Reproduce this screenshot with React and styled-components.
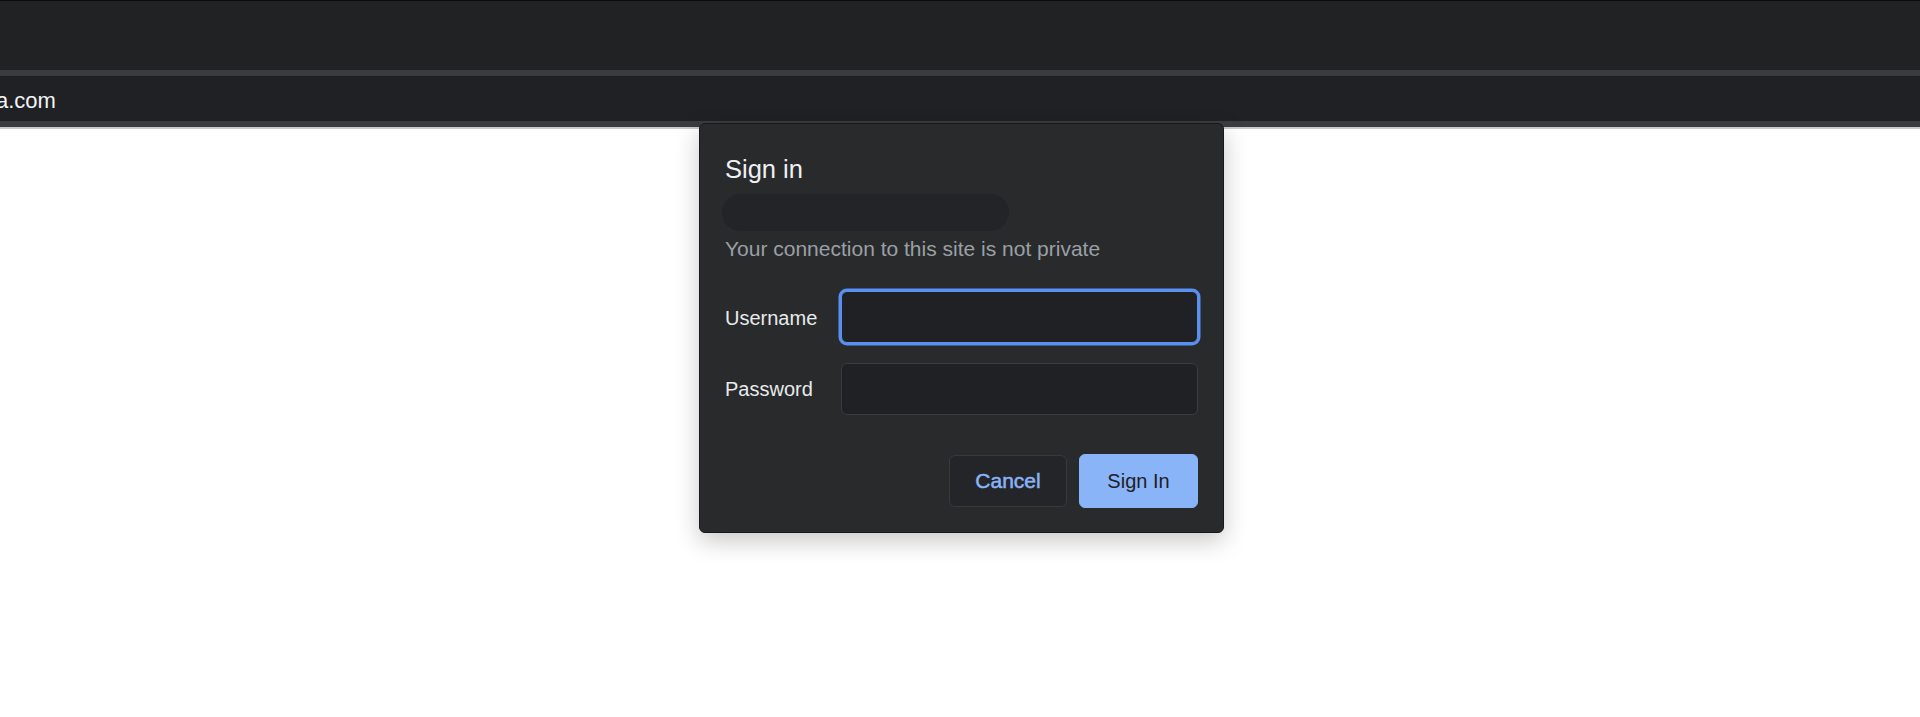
import styled, { createGlobalStyle } from "styled-components";

const GlobalStyle = createGlobalStyle`
  html, body {
    margin: 0;
    padding: 0;
    background: #ffffff;
    font-family: "Liberation Sans", Arial, sans-serif;
  }
  * {
    box-sizing: border-box;
  }
`;

export default function App() {
  return (
    <>
      <GlobalStyle />
      <Page>
        <TabStrip />
        <Divider />
        <AddressBar>
          <Url>a.com</Url>
        </AddressBar>
        <ToolbarEdge />

        <Dialog role="dialog" aria-label="Sign in">
          <Title>Sign in</Title>
          <OriginPill />
          <Notice>Your connection to this site is not private</Notice>

          <Form>
            <Label htmlFor="username" nudge="1px">Username</Label>
            <Field id="username" type="text" focused="true" />
            <Label htmlFor="password">Password</Label>
            <Field id="password" type="password" />
          </Form>

          <Actions>
            <Button>Cancel</Button>
            <Button primary="true">Sign In</Button>
          </Actions>
        </Dialog>
      </Page>
    </>
  );
}

const Page = styled.div`
  position: relative;
  width: 100%;
  height: 717px;
  overflow: hidden;
  background: #ffffff;
`;

const TabStrip = styled.div`
  height: 70px;
  background: #212224;
  border-top: 1px solid #0b0b0c;
`;

const Divider = styled.div`
  height: 7px;
  background: #3a3b3e;
  border-bottom: 1px solid #1d1e20;
`;

const AddressBar = styled.div`
  height: 44px;
  display: flex;
  align-items: center;
  padding-top: 3px;
  background: #202124;
`;

const Url = styled.span`
  margin-left: -4px;
  font-size: 22px;
  line-height: 26px;
  color: #f1f3f4;
`;

const ToolbarEdge = styled.div`
  height: 8px;
  background: #3b3c3f;
  border-bottom: 2px solid #c9cacc;
`;

const Dialog = styled.div`
  position: absolute;
  top: 123px;
  left: 699px;
  width: 525px;
  padding: 30px 25px 24px 22px;
  display: flex;
  flex-direction: column;
  background: #292a2c;
  border: 1px solid #17181a;
  border-radius: 6px;
  box-shadow: 0 8px 24px rgba(0, 0, 0, 0.22);
`;

const Title = styled.h2`
  margin: 0 0 0 3px;
  font-size: 25.5px;
  line-height: 30px;
  font-weight: 400;
  color: #eef0f2;
`;

const OriginPill = styled.div`
  margin-top: 10px;
  width: 287px;
  height: 37px;
  border-radius: 19px;
  background: #232427;
`;

const Notice = styled.p`
  margin: 5px 0 0 3px;
  font-size: 21px;
  line-height: 25px;
  color: #9aa0a6;
`;

const Form = styled.div`
  margin-top: 30px;
  display: grid;
  grid-template-columns: 119px 1fr;
  row-gap: 20px;
  align-items: center;
`;

const Label = styled.label`
  margin-left: 3px;
  padding-top: ${(p) => p.nudge || "0"};
  font-size: 20px;
  line-height: 24px;
  color: #e8eaed;
`;

const Field = styled.input`
  height: 52px;
  width: 100%;
  padding: 0 14px;
  font-size: 20px;
  color: #e8eaed;
  background: #202124;
  border-radius: 6px;
  outline: none;
  border: 1px solid ${(p) => (p.focused === "true" ? "#5a90f2" : "#3a3c3f")};
  box-shadow: ${(p) => (p.focused === "true" ? "0 0 0 2.5px #5a90f2" : "none")};
`;

const Actions = styled.div`
  margin-top: 39px;
  display: flex;
  justify-content: flex-end;
  align-items: center;
  gap: 12px;
`;

const Button = styled.button`
  width: ${(p) => (p.primary === "true" ? "119px" : "118px")};
  height: ${(p) => (p.primary === "true" ? "54px" : "52px")};
  padding: 0;
  font-family: "Liberation Sans", Arial, sans-serif;
  font-size: ${(p) => (p.primary === "true" ? "20px" : "21px")};
  font-weight: 400;
  -webkit-text-stroke: ${(p) => (p.primary === "true" ? "0" : "0.5px #8ab4f8")};
  border-radius: 6px;
  cursor: pointer;
  color: ${(p) => (p.primary === "true" ? "#202124" : "#8ab4f8")};
  background: ${(p) => (p.primary === "true" ? "#8ab4f8" : "#242528")};
  border: 1px solid ${(p) => (p.primary === "true" ? "#8ab4f8" : "#38393c")};
`;
